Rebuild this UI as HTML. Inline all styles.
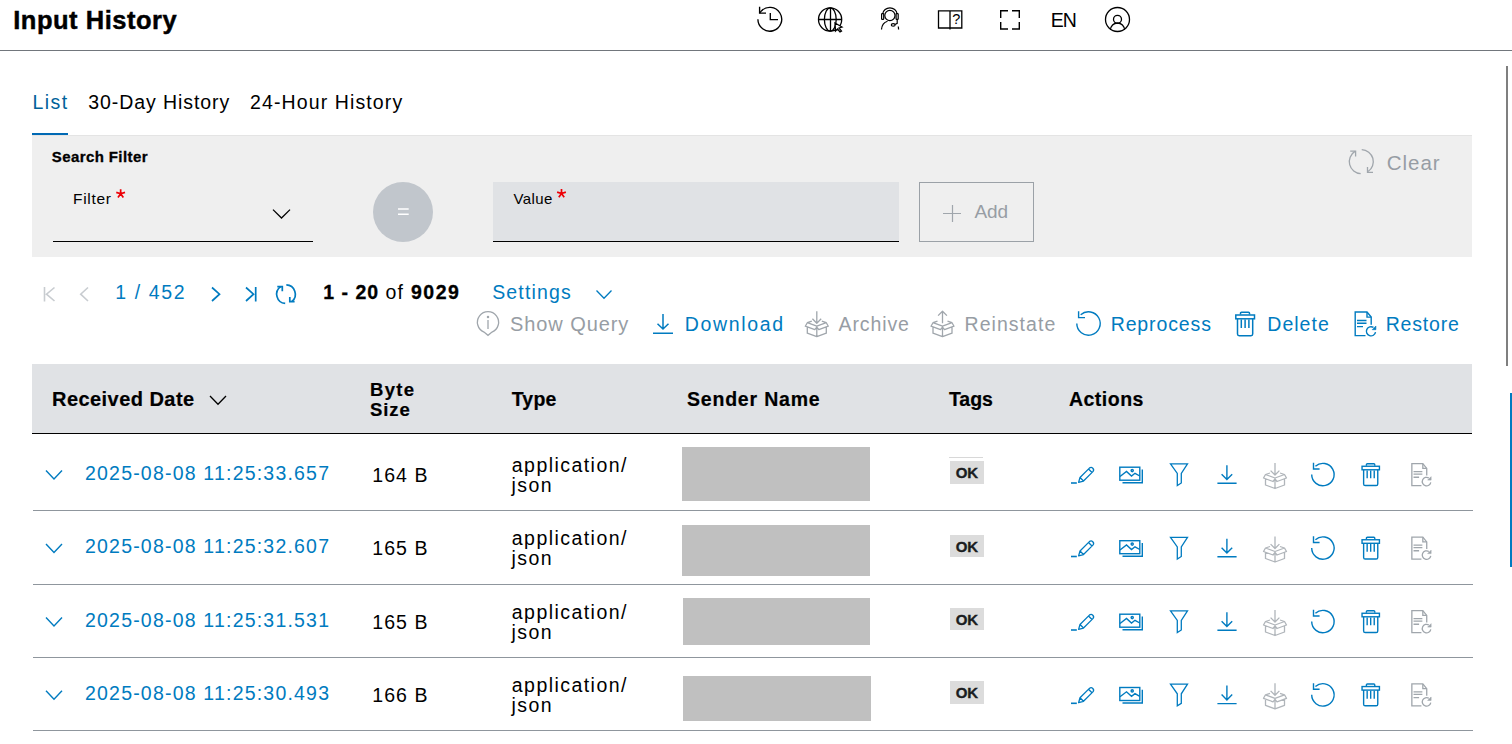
<!DOCTYPE html>
<html><head><meta charset="utf-8"><title>Input History</title>
<style>
html,body{margin:0;padding:0;background:#fff;width:1512px;height:744px;overflow:hidden;}
body{position:relative;font-family:"Liberation Sans",sans-serif;}
.t{position:absolute;white-space:pre;}
.r{position:absolute;}
svg{position:absolute;left:0;top:0;}
</style></head><body>
<div class="r" style="left:0px;top:50px;width:1512px;height:1px;background:#71767c"></div>
<div class="r" style="left:32px;top:133px;width:36px;height:2px;background:#0069b4"></div>
<div class="r" style="left:32px;top:135px;width:1440px;height:1px;background:#e4e4e4"></div>
<div class="r" style="left:32px;top:136px;width:1440px;height:121px;background:#efefef"></div>
<div class="r" style="left:53px;top:241px;width:260px;height:1px;background:#000"></div>
<div class="r" style="left:493px;top:182px;width:406px;height:60px;background:#e0e2e5"></div>
<div class="r" style="left:493px;top:241px;width:406px;height:1px;background:#000"></div>
<div class="r" style="left:32px;top:364px;width:1440px;height:68px;background:#e0e2e5"></div>
<div class="r" style="left:32px;top:432px;width:1440px;height:1px;background:#e0e2e5"></div>
<div class="r" style="left:32px;top:433px;width:1440px;height:1px;background:#000"></div>
<div class="r" style="left:33px;top:510px;width:1440px;height:1px;background:#8f969d"></div>
<div class="r" style="left:33px;top:584px;width:1440px;height:1px;background:#8f969d"></div>
<div class="r" style="left:33px;top:657px;width:1440px;height:1px;background:#8f969d"></div>
<div class="r" style="left:33px;top:730px;width:1440px;height:1px;background:#8f969d"></div>
<div class="r" style="left:1506px;top:66px;width:2px;height:300px;background:#7f7f7f"></div>
<div class="r" style="left:1510px;top:393px;width:2px;height:174px;background:#007bc0"></div>
<div class="r" style="left:949px;top:457px;width:34px;height:1px;background:#d8d8d8"></div>
<div class="r" style="left:682px;top:447px;width:188px;height:54px;background:#c0c0c0"></div>
<div class="r" style="left:682px;top:525px;width:188px;height:51px;background:#c0c0c0"></div>
<div class="r" style="left:683px;top:598px;width:187px;height:47px;background:#c0c0c0"></div>
<div class="r" style="left:683px;top:676px;width:188px;height:45px;background:#c0c0c0"></div>
<div class="r" style="left:950px;top:461px;width:34px;height:23px;background:#dcdcdc"></div>
<div class="r" style="left:950px;top:535px;width:34px;height:22px;background:#dcdcdc"></div>
<div class="r" style="left:950px;top:608px;width:34px;height:22px;background:#dcdcdc"></div>
<div class="r" style="left:950px;top:681px;width:34px;height:23px;background:#dcdcdc"></div>
<div class="r" style="left:919px;top:182px;width:113px;height:58px;border:1px solid #9ba1a7"></div>
<div class="r" style="left:373px;top:182px;width:60px;height:60px;border-radius:50%;background:#c1c6cc"></div>
<svg width="1512" height="744" viewBox="0 0 1512 744" fill="none" stroke-linecap="butt"><g stroke="#000" stroke-width="1.35"><path d="M759.6 13.1 L760.96 11.34 A11.9 11.9 0 1 1 757.90 19.30"/><path d="M759.6 6.8 V13.1 H766"/><path d="M770.3 13 V19.6 H778"/></g><g stroke="#000" stroke-width="1.3"><circle cx="830.1" cy="19.5" r="11.6"/><ellipse cx="830.3" cy="19.5" rx="5.9" ry="11.6"/><path d="M830.5 7.9 V31.1 M818.5 19.5 H841.7"/><path d="M835 23 L842 27 L839 28 L841.5 31 L840 32 L837.5 29 L835.5 31 Z" fill="#fff" stroke="#000"/></g><g stroke="#000" stroke-width="1.2"><circle cx="889.9" cy="15.5" r="5.1"/><path d="M882.6 14 A7.4 7.4 0 0 1 897.2 14"/><rect x="881.6" y="13.6" width="2.1" height="5.8" rx="0.6"/><rect x="896.1" y="13.6" width="2.1" height="5.8" rx="0.6"/><path d="M881.5 29.5 Q882 23 887.5 21.3"/><path d="M897.2 19.4 V23.3 L895 24.6"/><ellipse cx="893.2" cy="24.9" rx="1.9" ry="1.2"/><path d="M898.3 26.5 L898.6 29.5"/></g><g stroke="#000" stroke-width="1.3"><path d="M938.5 10.8 H961.8 V28 H938.5 Z M950 10.8 V29.5"/></g><text x="952.2" y="24.4" font-family="Liberation Sans" font-size="14.5" font-weight="400" fill="#000">?</text><g stroke="#000" stroke-width="1.4"><path d="M1000.7 18 V10.7 H1008 M1012 10.7 H1019.3 V18 M1019.3 22 V29 H1012 M1008 29 H1000.7 V22"/></g><g stroke="#000" stroke-width="1.3"><circle cx="1117.5" cy="19.5" r="12"/><circle cx="1117.5" cy="19.3" r="4"/><path d="M1110.5 30 A7 7 0 0 1 1124.5 30"/></g><path d="M120.65 193.8 L120.65 189.20 M120.65 193.8 L125.02 192.38 M120.65 193.8 L116.28 192.38 M120.65 193.8 L123.35 197.52 M120.65 193.8 L117.95 197.52" stroke="#ed0007" stroke-width="1.7" stroke-linecap="butt"/><path d="M561.5 193.5 L561.50 188.90 M561.5 193.5 L565.87 192.08 M561.5 193.5 L557.13 192.08 M561.5 193.5 L564.20 197.22 M561.5 193.5 L558.80 197.22" stroke="#ed0007" stroke-width="1.7" stroke-linecap="butt"/><path d="M273 209.6 L281.5 218 L290 209.6" stroke="#000" stroke-width="1.3"/><path d="M398 209 H408.7 M398 214.3 H408.7" stroke="#fff" stroke-width="1.5"/><path d="M943 213.5 H961 M952.5 205 V222" stroke="#a0a6ac" stroke-width="1.2"/><g stroke="#a0a6ac" stroke-width="1.3"><path d="M1360.67 173.58 A12 12 0 0 1 1354.94 151.42"/><path d="M1350.2 151.2 H1355.6 V156.5"/><path d="M1361.72 149.61 A12 12 0 0 1 1368.01 171.55"/><path d="M1367.5 167 V172.3 H1373"/></g><g stroke="#c8ccd0" stroke-width="1.6"><path d="M44.5 287 V301.5 M54.5 287.5 L46.5 294.2 L54.5 301"/><path d="M88 287.5 L80.7 294.2 L88 301"/></g><g stroke="#007bc0" stroke-width="1.7"><path d="M212 287.5 L219.5 294.2 L212 301"/><path d="M246 287.5 L253.5 294.2 L246 301 M255.7 287 V301.5"/></g><g stroke="#007bc0" stroke-width="1.7"><path d="M285.19 303.46 A9.3 9.3 0 0 1 280.67 286.58"/><path d="M277.3 286.6 H282.3 V291.2"/><path d="M286.32 284.91 A9.3 9.3 0 0 1 291.98 301.32"/><path d="M289.8 297 V301.7 H294.6"/></g><path d="M210 396 L218 404.2 L226 396" stroke="#000" stroke-width="1.3"/><path d="M46 470.5 L54 479.0 L62 470.5" stroke="#007bc0" stroke-width="1.4"/><path d="M46 544 L54 552.5 L62 544" stroke="#007bc0" stroke-width="1.4"/><path d="M46 617.5 L54 626.0 L62 617.5" stroke="#007bc0" stroke-width="1.4"/><path d="M46 690.8 L54 699.3 L62 690.8" stroke="#007bc0" stroke-width="1.4"/><path d="M596.5 290.5 L604 298.2 L611.5 290.5" stroke="#007bc0" stroke-width="1.3"/><g stroke="#a0a6ac" stroke-width="1.3"><path d="M484.03 332.03 A10.6 10.6 0 1 1 491.97 332.03 L488 335.3 Z"/><path d="M488 320 V329"/><circle cx="488" cy="317" r="0.6" fill="#a0a6ac"/></g><g stroke="#007bc0" stroke-width="1.5"><path d="M663 314 V329 M657.5 323.7 L663 329 L668.5 323.7 M653 333.2 H673"/></g><path d="M816.8 311.2 V323.2 M812.4 318.8 L816.8 323.2 L821.1999999999999 318.8 M811.8 321.2 L807.3 322.7 L805.3 326.2 L814.8 329.7 L816.8 327.2 L818.8 329.7 L828.3 326.2 L826.3 322.7 L821.8 321.2 M807.3 322.7 L816.8 326.2 L826.3 322.7 M807.3 327.2 V333.2 L816.8 336.7 L826.3 333.2 V327.2 M816.8 326.2 V336.7" stroke="#a0a6ac" stroke-width="1.3" stroke-linejoin="round"/><path d="M942.5 323.2 V311.2 M938.1 315.59999999999997 L942.5 311.2 L946.9 315.59999999999997 M937.5 321.2 L933.0 322.7 L931.0 326.2 L940.5 329.7 L942.5 327.2 L944.5 329.7 L954.0 326.2 L952.0 322.7 L947.5 321.2 M933.0 322.7 L942.5 326.2 L952.0 322.7 M933.0 327.2 V333.2 L942.5 336.7 L952.0 333.2 V327.2 M942.5 326.2 V336.7" stroke="#a0a6ac" stroke-width="1.3" stroke-linejoin="round"/><g stroke="#007bc0" stroke-width="1.4"><path d="M1080.67 314.81 A11.7 11.7 0 1 1 1076.80 323.50"/><path d="M1078.60 311.20 V317.60 H1085.00"/></g><g stroke="#007bc0" stroke-width="1.5" transform="translate(1235 311.5) scale(1.0)"><path d="M5.5 3 V1.8 Q5.5 0.8 6.5 0.8 H13.5 Q14.5 0.8 14.5 1.8 V3"/><rect x="0.8" y="3.5" width="18.7" height="3.8"/><path d="M2.5 7.3 V22.5 Q2.5 24.2 4.2 24.2 H16 Q17.7 24.2 17.7 22.5 V7.3"/><path d="M6.3 8 V16.5 M10.1 8 V16.5 M13.9 8 V16.5"/></g><g stroke="#007bc0" stroke-width="1.4" transform="translate(1354.5 311.3) scale(1.0)"><path d="M11 24.3 H0.7 V0.7 H12.5 L16.7 5.8 V13.5"/><path d="M12.5 0.7 V5.8 H16.7"/><path d="M2.5 9.2 H12 M2.5 12 H12 M2.5 15.3 H8.5"/><path d="M21.03 20.8 A4.6 4.6 0 1 1 19.0 16.14"/><path d="M17.7 18.4 H21.4 V14.7 Z" fill="#007bc0" stroke-width="0.6"/></g><g stroke="#007bc0" stroke-width="1.3" stroke-linejoin="round" transform="translate(0 0.0)"><path d="M1071 483 H1076.8" stroke-width="1.6"/><path d="M1078.6 482.4 L1080 477.5 L1089.4 468.1 A2.48 2.48 0 0 1 1092.9 471.6 L1083.5 481 Z M1080 477.5 L1083.5 481 M1088.5 469 L1092 472.5"/></g><g stroke="#007bc0" stroke-width="1.4" transform="translate(0 0.0)"><rect x="1119.8" y="467.2" width="20" height="13"/><path d="M1142.3 469.5 V482.7 H1122.5"/><path d="M1120 476.5 L1126.5 471.5 L1131.5 476 L1135 473.3 L1139.8 476"/><circle cx="1132.2" cy="470.6" r="1.1"/></g><path transform="translate(0 0.0)" d="M1170.5 463.8 H1187.5 L1181.3 473.5 V483 L1177.3 485.5 V473.5 Z" stroke="#007bc0" stroke-width="1.3" stroke-linejoin="miter"/><g stroke="#007bc0" stroke-width="1.4" transform="translate(0 0.0)"><path d="M1226.9 465.3 V479.6 M1221.6 474.3 L1226.9 479.6 L1232.2 474.3 M1217.4 483.3 H1236.6"/></g><g transform="translate(0 0.0)"><path d="M1275 463 V475 M1270.6 470.6 L1275 475 L1279.4 470.6 M1270 473 L1265.5 474.5 L1263.5 478 L1273 481.5 L1275 479 L1277 481.5 L1286.5 478 L1284.5 474.5 L1280 473 M1265.5 474.5 L1275 478 L1284.5 474.5 M1265.5 479 V485 L1275 488.5 L1284.5 485 V479 M1275 478 V488.5" stroke="#b0b5ba" stroke-width="1.3" stroke-linejoin="round"/></g><g transform="translate(0 0.0)"><g stroke="#007bc0" stroke-width="1.4"><path d="M1315.41 466.23 A11.2 11.2 0 1 1 1311.70 474.55"/><path d="M1313.50 462.87 V468.94 H1319.58"/></g></g><g stroke="#007bc0" stroke-width="1.5" transform="translate(1361.3 463.0) scale(0.93)"><path d="M5.5 3 V1.8 Q5.5 0.8 6.5 0.8 H13.5 Q14.5 0.8 14.5 1.8 V3"/><rect x="0.8" y="3.5" width="18.7" height="3.8"/><path d="M2.5 7.3 V22.5 Q2.5 24.2 4.2 24.2 H16 Q17.7 24.2 17.7 22.5 V7.3"/><path d="M6.3 8 V16.5 M10.1 8 V16.5 M13.9 8 V16.5"/></g><g stroke="#a0a6ac" stroke-width="1.4" transform="translate(1411.2 463.0) scale(0.93)"><path d="M11 24.3 H0.7 V0.7 H12.5 L16.7 5.8 V13.5"/><path d="M12.5 0.7 V5.8 H16.7"/><path d="M2.5 9.2 H12 M2.5 12 H12 M2.5 15.3 H8.5"/><path d="M21.03 20.8 A4.6 4.6 0 1 1 19.0 16.14"/><path d="M17.7 18.4 H21.4 V14.7 Z" fill="#a0a6ac" stroke-width="0.6"/></g><g stroke="#007bc0" stroke-width="1.3" stroke-linejoin="round" transform="translate(0 73.5)"><path d="M1071 483 H1076.8" stroke-width="1.6"/><path d="M1078.6 482.4 L1080 477.5 L1089.4 468.1 A2.48 2.48 0 0 1 1092.9 471.6 L1083.5 481 Z M1080 477.5 L1083.5 481 M1088.5 469 L1092 472.5"/></g><g stroke="#007bc0" stroke-width="1.4" transform="translate(0 73.5)"><rect x="1119.8" y="467.2" width="20" height="13"/><path d="M1142.3 469.5 V482.7 H1122.5"/><path d="M1120 476.5 L1126.5 471.5 L1131.5 476 L1135 473.3 L1139.8 476"/><circle cx="1132.2" cy="470.6" r="1.1"/></g><path transform="translate(0 73.5)" d="M1170.5 463.8 H1187.5 L1181.3 473.5 V483 L1177.3 485.5 V473.5 Z" stroke="#007bc0" stroke-width="1.3" stroke-linejoin="miter"/><g stroke="#007bc0" stroke-width="1.4" transform="translate(0 73.5)"><path d="M1226.9 465.3 V479.6 M1221.6 474.3 L1226.9 479.6 L1232.2 474.3 M1217.4 483.3 H1236.6"/></g><g transform="translate(0 73.5)"><path d="M1275 463 V475 M1270.6 470.6 L1275 475 L1279.4 470.6 M1270 473 L1265.5 474.5 L1263.5 478 L1273 481.5 L1275 479 L1277 481.5 L1286.5 478 L1284.5 474.5 L1280 473 M1265.5 474.5 L1275 478 L1284.5 474.5 M1265.5 479 V485 L1275 488.5 L1284.5 485 V479 M1275 478 V488.5" stroke="#b0b5ba" stroke-width="1.3" stroke-linejoin="round"/></g><g transform="translate(0 73.5)"><g stroke="#007bc0" stroke-width="1.4"><path d="M1315.41 466.23 A11.2 11.2 0 1 1 1311.70 474.55"/><path d="M1313.50 462.87 V468.94 H1319.58"/></g></g><g stroke="#007bc0" stroke-width="1.5" transform="translate(1361.3 536.5) scale(0.93)"><path d="M5.5 3 V1.8 Q5.5 0.8 6.5 0.8 H13.5 Q14.5 0.8 14.5 1.8 V3"/><rect x="0.8" y="3.5" width="18.7" height="3.8"/><path d="M2.5 7.3 V22.5 Q2.5 24.2 4.2 24.2 H16 Q17.7 24.2 17.7 22.5 V7.3"/><path d="M6.3 8 V16.5 M10.1 8 V16.5 M13.9 8 V16.5"/></g><g stroke="#a0a6ac" stroke-width="1.4" transform="translate(1411.2 536.5) scale(0.93)"><path d="M11 24.3 H0.7 V0.7 H12.5 L16.7 5.8 V13.5"/><path d="M12.5 0.7 V5.8 H16.7"/><path d="M2.5 9.2 H12 M2.5 12 H12 M2.5 15.3 H8.5"/><path d="M21.03 20.8 A4.6 4.6 0 1 1 19.0 16.14"/><path d="M17.7 18.4 H21.4 V14.7 Z" fill="#a0a6ac" stroke-width="0.6"/></g><g stroke="#007bc0" stroke-width="1.3" stroke-linejoin="round" transform="translate(0 147.0)"><path d="M1071 483 H1076.8" stroke-width="1.6"/><path d="M1078.6 482.4 L1080 477.5 L1089.4 468.1 A2.48 2.48 0 0 1 1092.9 471.6 L1083.5 481 Z M1080 477.5 L1083.5 481 M1088.5 469 L1092 472.5"/></g><g stroke="#007bc0" stroke-width="1.4" transform="translate(0 147.0)"><rect x="1119.8" y="467.2" width="20" height="13"/><path d="M1142.3 469.5 V482.7 H1122.5"/><path d="M1120 476.5 L1126.5 471.5 L1131.5 476 L1135 473.3 L1139.8 476"/><circle cx="1132.2" cy="470.6" r="1.1"/></g><path transform="translate(0 147.0)" d="M1170.5 463.8 H1187.5 L1181.3 473.5 V483 L1177.3 485.5 V473.5 Z" stroke="#007bc0" stroke-width="1.3" stroke-linejoin="miter"/><g stroke="#007bc0" stroke-width="1.4" transform="translate(0 147.0)"><path d="M1226.9 465.3 V479.6 M1221.6 474.3 L1226.9 479.6 L1232.2 474.3 M1217.4 483.3 H1236.6"/></g><g transform="translate(0 147.0)"><path d="M1275 463 V475 M1270.6 470.6 L1275 475 L1279.4 470.6 M1270 473 L1265.5 474.5 L1263.5 478 L1273 481.5 L1275 479 L1277 481.5 L1286.5 478 L1284.5 474.5 L1280 473 M1265.5 474.5 L1275 478 L1284.5 474.5 M1265.5 479 V485 L1275 488.5 L1284.5 485 V479 M1275 478 V488.5" stroke="#b0b5ba" stroke-width="1.3" stroke-linejoin="round"/></g><g transform="translate(0 147.0)"><g stroke="#007bc0" stroke-width="1.4"><path d="M1315.41 466.23 A11.2 11.2 0 1 1 1311.70 474.55"/><path d="M1313.50 462.87 V468.94 H1319.58"/></g></g><g stroke="#007bc0" stroke-width="1.5" transform="translate(1361.3 610.0) scale(0.93)"><path d="M5.5 3 V1.8 Q5.5 0.8 6.5 0.8 H13.5 Q14.5 0.8 14.5 1.8 V3"/><rect x="0.8" y="3.5" width="18.7" height="3.8"/><path d="M2.5 7.3 V22.5 Q2.5 24.2 4.2 24.2 H16 Q17.7 24.2 17.7 22.5 V7.3"/><path d="M6.3 8 V16.5 M10.1 8 V16.5 M13.9 8 V16.5"/></g><g stroke="#a0a6ac" stroke-width="1.4" transform="translate(1411.2 610.0) scale(0.93)"><path d="M11 24.3 H0.7 V0.7 H12.5 L16.7 5.8 V13.5"/><path d="M12.5 0.7 V5.8 H16.7"/><path d="M2.5 9.2 H12 M2.5 12 H12 M2.5 15.3 H8.5"/><path d="M21.03 20.8 A4.6 4.6 0 1 1 19.0 16.14"/><path d="M17.7 18.4 H21.4 V14.7 Z" fill="#a0a6ac" stroke-width="0.6"/></g><g stroke="#007bc0" stroke-width="1.3" stroke-linejoin="round" transform="translate(0 220.29999999999995)"><path d="M1071 483 H1076.8" stroke-width="1.6"/><path d="M1078.6 482.4 L1080 477.5 L1089.4 468.1 A2.48 2.48 0 0 1 1092.9 471.6 L1083.5 481 Z M1080 477.5 L1083.5 481 M1088.5 469 L1092 472.5"/></g><g stroke="#007bc0" stroke-width="1.4" transform="translate(0 220.29999999999995)"><rect x="1119.8" y="467.2" width="20" height="13"/><path d="M1142.3 469.5 V482.7 H1122.5"/><path d="M1120 476.5 L1126.5 471.5 L1131.5 476 L1135 473.3 L1139.8 476"/><circle cx="1132.2" cy="470.6" r="1.1"/></g><path transform="translate(0 220.29999999999995)" d="M1170.5 463.8 H1187.5 L1181.3 473.5 V483 L1177.3 485.5 V473.5 Z" stroke="#007bc0" stroke-width="1.3" stroke-linejoin="miter"/><g stroke="#007bc0" stroke-width="1.4" transform="translate(0 220.29999999999995)"><path d="M1226.9 465.3 V479.6 M1221.6 474.3 L1226.9 479.6 L1232.2 474.3 M1217.4 483.3 H1236.6"/></g><g transform="translate(0 220.29999999999995)"><path d="M1275 463 V475 M1270.6 470.6 L1275 475 L1279.4 470.6 M1270 473 L1265.5 474.5 L1263.5 478 L1273 481.5 L1275 479 L1277 481.5 L1286.5 478 L1284.5 474.5 L1280 473 M1265.5 474.5 L1275 478 L1284.5 474.5 M1265.5 479 V485 L1275 488.5 L1284.5 485 V479 M1275 478 V488.5" stroke="#b0b5ba" stroke-width="1.3" stroke-linejoin="round"/></g><g transform="translate(0 220.29999999999995)"><g stroke="#007bc0" stroke-width="1.4"><path d="M1315.41 466.23 A11.2 11.2 0 1 1 1311.70 474.55"/><path d="M1313.50 462.87 V468.94 H1319.58"/></g></g><g stroke="#007bc0" stroke-width="1.5" transform="translate(1361.3 683.3) scale(0.93)"><path d="M5.5 3 V1.8 Q5.5 0.8 6.5 0.8 H13.5 Q14.5 0.8 14.5 1.8 V3"/><rect x="0.8" y="3.5" width="18.7" height="3.8"/><path d="M2.5 7.3 V22.5 Q2.5 24.2 4.2 24.2 H16 Q17.7 24.2 17.7 22.5 V7.3"/><path d="M6.3 8 V16.5 M10.1 8 V16.5 M13.9 8 V16.5"/></g><g stroke="#a0a6ac" stroke-width="1.4" transform="translate(1411.2 683.3) scale(0.93)"><path d="M11 24.3 H0.7 V0.7 H12.5 L16.7 5.8 V13.5"/><path d="M12.5 0.7 V5.8 H16.7"/><path d="M2.5 9.2 H12 M2.5 12 H12 M2.5 15.3 H8.5"/><path d="M21.03 20.8 A4.6 4.6 0 1 1 19.0 16.14"/><path d="M17.7 18.4 H21.4 V14.7 Z" fill="#a0a6ac" stroke-width="0.6"/></g></svg>
<div class="t" id="title" style="left:13.2px;top:8.00px;font-size:25.5px;line-height:25.5px;font-weight:700;color:#000;letter-spacing:0.52px;-webkit-text-stroke:0.45px #000;">Input History</div>
<div class="t" id="en" style="left:1050.7px;top:11.00px;font-size:19.5px;line-height:19.5px;font-weight:400;color:#000;letter-spacing:-1.0px;">EN</div>
<div class="t" id="tab1" style="left:32.5px;top:93.00px;font-size:19.5px;line-height:19.5px;font-weight:400;color:#00629a;letter-spacing:1.4px;">List</div>
<div class="t" id="tab2" style="left:88.2px;top:93.00px;font-size:19.5px;line-height:19.5px;font-weight:400;color:#000;letter-spacing:0.93px;">30-Day History</div>
<div class="t" id="tab3" style="left:250.1px;top:93.00px;font-size:19.5px;line-height:19.5px;font-weight:400;color:#000;letter-spacing:1.11px;">24-Hour History</div>
<div class="t" id="sf" style="left:51.8px;top:149.00px;font-size:15px;line-height:15px;font-weight:700;color:#000;letter-spacing:0.4px;-webkit-text-stroke:0.3px #000;">Search Filter</div>
<div class="t" id="flt" style="left:73px;top:191.00px;font-size:15.5px;line-height:15.5px;font-weight:400;color:#000;letter-spacing:0.7px;">Filter</div>
<div class="t" id="val" style="left:513.5px;top:191.00px;font-size:15px;line-height:15px;font-weight:400;color:#000;letter-spacing:0.4px;">Value</div>
<div class="t" id="add" style="left:974.5px;top:202.00px;font-size:19px;line-height:19px;font-weight:400;color:#979da4;letter-spacing:-0.1px;">Add</div>
<div class="t" id="clear" style="left:1386.7px;top:153.00px;font-size:20.5px;line-height:20.5px;font-weight:400;color:#979da4;letter-spacing:1.0px;">Clear</div>
<div class="t" id="pg" style="left:115.3px;top:283.00px;font-size:19.5px;line-height:19.5px;font-weight:400;color:#007bc0;letter-spacing:1.6px;">1 / 452</div>
<div class="t" id="cnt1" style="left:323.3px;top:283.00px;font-size:19.5px;line-height:19.5px;font-weight:700;color:#000;letter-spacing:1.0px;-webkit-text-stroke:0.3px #000;">1 - 20</div>
<div class="t" id="cnt2" style="left:385.5px;top:283.00px;font-size:19.5px;line-height:19.5px;font-weight:400;color:#000;letter-spacing:1.1px;">of</div>
<div class="t" id="cnt3" style="left:411px;top:283.00px;font-size:19.5px;line-height:19.5px;font-weight:700;color:#000;letter-spacing:1.5px;-webkit-text-stroke:0.3px #000;">9029</div>
<div class="t" id="set" style="left:492.2px;top:283.00px;font-size:19.5px;line-height:19.5px;font-weight:400;color:#007bc0;letter-spacing:1.15px;">Settings</div>
<div class="t" id="sq" style="left:510px;top:314.00px;font-size:20px;line-height:20px;font-weight:400;color:#979da4;letter-spacing:0.92px;">Show Query</div>
<div class="t" id="dl" style="left:684.8px;top:315.00px;font-size:19.5px;line-height:19.5px;font-weight:400;color:#007bc0;letter-spacing:1.66px;">Download</div>
<div class="t" id="ar" style="left:838.5px;top:315.00px;font-size:19.5px;line-height:19.5px;font-weight:400;color:#979da4;letter-spacing:0.9px;">Archive</div>
<div class="t" id="rs" style="left:964.5px;top:315.00px;font-size:19.5px;line-height:19.5px;font-weight:400;color:#979da4;letter-spacing:1.05px;">Reinstate</div>
<div class="t" id="rp" style="left:1110.7px;top:315.00px;font-size:19.5px;line-height:19.5px;font-weight:400;color:#007bc0;letter-spacing:0.88px;">Reprocess</div>
<div class="t" id="de" style="left:1267.3px;top:315.00px;font-size:19.5px;line-height:19.5px;font-weight:400;color:#007bc0;letter-spacing:1.02px;">Delete</div>
<div class="t" id="rt" style="left:1385.7px;top:315.00px;font-size:19.5px;line-height:19.5px;font-weight:400;color:#007bc0;letter-spacing:0.8px;">Restore</div>
<div class="t" id="h1" style="left:52px;top:389.00px;font-size:20px;line-height:20px;font-weight:700;color:#000;letter-spacing:0.45px;-webkit-text-stroke:0.2px #000;">Received Date</div>
<div class="t" id="h2a" style="left:370px;top:381.00px;font-size:18.5px;line-height:18.5px;font-weight:700;color:#000;letter-spacing:1.3px;-webkit-text-stroke:0.2px #000;">Byte</div>
<div class="t" id="h2b" style="left:370px;top:401.00px;font-size:18.5px;line-height:18.5px;font-weight:700;color:#000;letter-spacing:0.9px;-webkit-text-stroke:0.2px #000;">Size</div>
<div class="t" id="h3" style="left:511.7px;top:390.00px;font-size:19.5px;line-height:19.5px;font-weight:700;color:#000;letter-spacing:0.2px;-webkit-text-stroke:0.2px #000;">Type</div>
<div class="t" id="h4" style="left:687px;top:390.00px;font-size:19.5px;line-height:19.5px;font-weight:700;color:#000;letter-spacing:0.8px;-webkit-text-stroke:0.2px #000;">Sender Name</div>
<div class="t" id="h5" style="left:948.9px;top:390.00px;font-size:19.5px;line-height:19.5px;font-weight:700;color:#000;letter-spacing:0.0px;-webkit-text-stroke:0.2px #000;">Tags</div>
<div class="t" id="h6" style="left:1068.9px;top:390.00px;font-size:19.5px;line-height:19.5px;font-weight:700;color:#000;letter-spacing:0.5px;-webkit-text-stroke:0.2px #000;">Actions</div>
<div class="t" id="d0" style="left:85px;top:464.00px;font-size:19.5px;line-height:19.5px;font-weight:400;color:#007bc0;letter-spacing:1.2px;">2025-08-08 11:25:33.657</div>
<div class="t" id="b0" style="left:372.2px;top:466.00px;font-size:19.5px;line-height:19.5px;font-weight:400;color:#000;letter-spacing:1.1px;">164 B</div>
<div class="t" id="ta0" style="left:511.8px;top:456.00px;font-size:19.5px;line-height:19.5px;font-weight:400;color:#000;letter-spacing:1.45px;">application/</div>
<div class="t" id="tb0" style="left:511.5px;top:476.00px;font-size:19.5px;line-height:19.5px;font-weight:400;color:#000;letter-spacing:1.45px;">json</div>
<div class="t" id="ok0" style="left:955.8px;top:465.00px;font-size:15px;line-height:15px;font-weight:700;color:#1a1d21;letter-spacing:-0.3px;-webkit-text-stroke:0.35px #1a1d21;">OK</div>
<div class="t" id="d1" style="left:85px;top:537.00px;font-size:19.5px;line-height:19.5px;font-weight:400;color:#007bc0;letter-spacing:1.2px;">2025-08-08 11:25:32.607</div>
<div class="t" id="b1" style="left:372.2px;top:539.00px;font-size:19.5px;line-height:19.5px;font-weight:400;color:#000;letter-spacing:1.1px;">165 B</div>
<div class="t" id="ta1" style="left:511.8px;top:529.00px;font-size:19.5px;line-height:19.5px;font-weight:400;color:#000;letter-spacing:1.45px;">application/</div>
<div class="t" id="tb1" style="left:511.5px;top:549.00px;font-size:19.5px;line-height:19.5px;font-weight:400;color:#000;letter-spacing:1.45px;">json</div>
<div class="t" id="ok1" style="left:955.8px;top:539.00px;font-size:15px;line-height:15px;font-weight:700;color:#1a1d21;letter-spacing:-0.3px;-webkit-text-stroke:0.35px #1a1d21;">OK</div>
<div class="t" id="d2" style="left:85px;top:611.00px;font-size:19.5px;line-height:19.5px;font-weight:400;color:#007bc0;letter-spacing:1.2px;">2025-08-08 11:25:31.531</div>
<div class="t" id="b2" style="left:372.2px;top:613.00px;font-size:19.5px;line-height:19.5px;font-weight:400;color:#000;letter-spacing:1.1px;">165 B</div>
<div class="t" id="ta2" style="left:511.8px;top:603.00px;font-size:19.5px;line-height:19.5px;font-weight:400;color:#000;letter-spacing:1.45px;">application/</div>
<div class="t" id="tb2" style="left:511.5px;top:623.00px;font-size:19.5px;line-height:19.5px;font-weight:400;color:#000;letter-spacing:1.45px;">json</div>
<div class="t" id="ok2" style="left:955.8px;top:612.00px;font-size:15px;line-height:15px;font-weight:700;color:#1a1d21;letter-spacing:-0.3px;-webkit-text-stroke:0.35px #1a1d21;">OK</div>
<div class="t" id="d3" style="left:85px;top:684.00px;font-size:19.5px;line-height:19.5px;font-weight:400;color:#007bc0;letter-spacing:1.2px;">2025-08-08 11:25:30.493</div>
<div class="t" id="b3" style="left:372.2px;top:686.00px;font-size:19.5px;line-height:19.5px;font-weight:400;color:#000;letter-spacing:1.1px;">166 B</div>
<div class="t" id="ta3" style="left:511.8px;top:676.00px;font-size:19.5px;line-height:19.5px;font-weight:400;color:#000;letter-spacing:1.45px;">application/</div>
<div class="t" id="tb3" style="left:511.5px;top:696.00px;font-size:19.5px;line-height:19.5px;font-weight:400;color:#000;letter-spacing:1.45px;">json</div>
<div class="t" id="ok3" style="left:955.8px;top:685.00px;font-size:15px;line-height:15px;font-weight:700;color:#1a1d21;letter-spacing:-0.3px;-webkit-text-stroke:0.35px #1a1d21;">OK</div>
</body></html>
